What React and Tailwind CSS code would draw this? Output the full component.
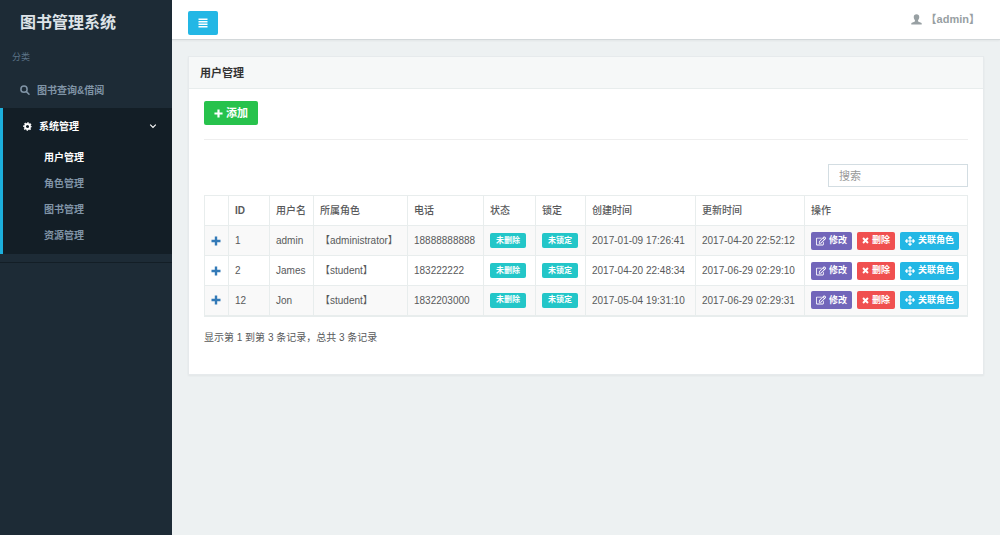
import React from 'react';
import { FaArrowsAlt, FaRegEdit } from 'react-icons/fa';

const users = [
  { id: 1, name: 'admin', role: '【administrator】', phone: '18888888888', created: '2017-01-09 17:26:41', updated: '2017-04-20 22:52:12' },
  { id: 2, name: 'James', role: '【student】', phone: '183222222', created: '2017-04-20 22:48:34', updated: '2017-06-29 02:29:10' },
  { id: 12, name: 'Jon', role: '【student】', phone: '1832203000', created: '2017-05-04 19:31:10', updated: '2017-06-29 02:29:31' },
];

const columns = [
  { title: '', width: 'w-[24px]' },
  { title: 'ID', width: 'w-[41px]' },
  { title: '用户名', width: 'w-[44px]' },
  { title: '所属角色', width: 'w-[94px]' },
  { title: '电话', width: 'w-[76px]' },
  { title: '状态', width: 'w-[52px]' },
  { title: '锁定', width: 'w-[50px]' },
  { title: '创建时间', width: 'w-[110px]' },
  { title: '更新时间', width: 'w-[109px]' },
  { title: '操作', width: '' },
];

const menu = ['用户管理', '角色管理', '图书管理', '资源管理'];

const PlusIcon = ({ className }) => (
  <svg viewBox="0 0 10 10" fill="currentColor" className={className}>
    <path d="M3.8 .5h2.4v3.3h3.3v2.4H6.2v3.3H3.8V6.2H.5V3.8h3.3z" />
  </svg>
);

const TimesIcon = ({ className }) => (
  <svg viewBox="0 0 10 10" fill="none" stroke="currentColor" strokeWidth="2.8" className={className}>
    <path d="M1.5 1.5l7 7M8.5 1.5l-7 7" />
  </svg>
);

const AngleIcon = ({ className }) => (
  <svg viewBox="0 0 10 10" fill="none" stroke="currentColor" strokeWidth="1.4" className={className}>
    <path d="M1.5 3.2L5 6.7l3.5-3.5" />
  </svg>
);

const BarsIcon = ({ className }) => (
  <svg viewBox="0 0 10 10" fill="currentColor" className={className}>
    <path d="M.5 .6h9v1.5h-9zM.5 3.100h9v1.500h-9zM.5 5.600h9v1.500h-9zM.5 8.100h9v1.500h-9z" />
  </svg>
);

const SearchIcon = ({ className }) => (
  <svg viewBox="0 0 10 10" fill="none" stroke="currentColor" strokeWidth="1.5" className={className}>
    <circle cx="4" cy="4.2" r="3.1" />
    <path d="M6.4 6.6l2.6 2.600" strokeLinecap="round" />
  </svg>
);

// ring with eight short teeth
const CogIcon = ({ className }) => (
  <svg viewBox="0 0 10 10" fill="none" stroke="currentColor" className={className}>
    <circle cx="5" cy="5" r="2.8" strokeWidth="2.1" />
    <circle cx="5" cy="5" r="4.2" strokeWidth="1.3" strokeDasharray="1.65 1.65" strokeDashoffset=".825" />
  </svg>
);

const UserIcon = ({ className }) => (
  <svg viewBox="0 0 12 12" fill="currentColor" className={className}>
    <path d="M6 .3c1.9 0 3 1.2 3 3 0 1.4-.5 2.7-1.3 3.5v.9c0 .4.2.6.6.8l2.700 1.100c.5.2.7.5.7.9v1H.3v-1c0-.4.2-.7.7-.9l2.700-1.100c.4-.2.6-.4.6-.8v-.9C3.500 6 3 4.700 3 3.300 3 1.500 4.100.3 6 .3z" />
  </svg>
);

const Tag = ({ children }) => (
  <span className="flex h-[15px] w-9 items-center justify-center rounded-xs bg-[#23c6c8] text-[8px] font-bold text-white">
    {children}
  </span>
);

const ActionButton = ({ color, icon, children }) => (
  <button type="button" className={`flex h-[18px] items-center gap-[3px] rounded-xs px-[5px] text-[9px] font-bold whitespace-nowrap text-white ${color}`}>
    {icon}
    {children}
  </button>
);

const Sidebar = () => (
  <aside className="w-43 shrink-0 bg-[#1d2b36] text-[10px] font-bold text-[#8094a6]">
    <h1 className="flex h-11 items-center px-5 pt-0.5 text-[16px] font-bold text-[#dde3e8]">图书管理系统</h1>
    <p className="flex h-7 items-center px-3 text-[9px] font-normal text-[#5c7387]">分类</p>
    <nav>
      <a href="#books" className="flex h-9 items-center gap-[7px] px-5">
        <SearchIcon className="size-[10px]" />
        图书查询&amp;借阅
      </a>
      <div className="border-l-3 border-[#1cafdc] bg-[#131e26] pb-1.5">
        <a href="#system" className="flex h-9 items-center gap-[7px] pr-[15px] pl-5 text-white">
          <CogIcon className="size-[9px]" />
          系统管理
          <AngleIcon className="ml-auto size-2" />
        </a>
        <ul>
          {menu.map((item, i) => (
            <li key={item}>
              <a href="#system" className={`flex h-[26px] items-center pl-[41px] ${i === 0 ? 'text-white' : ''}`}>
                {item}
              </a>
            </li>
          ))}
        </ul>
      </div>
      <hr className="mt-2 border-[#131e26]" />
    </nav>
  </aside>
);

const UserTable = () => (
  <table className="w-full table-fixed border-collapse border border-b-2 border-[#e8eded]">
    <colgroup>
      {columns.map((col) => (
        <col key={col.title} className={col.width} />
      ))}
    </colgroup>
    <thead>
      <tr className="h-[30px]">
        {columns.map((col) => (
          <th key={col.title} className="border border-[#e8eded] px-1.5 text-left font-medium whitespace-nowrap nth-[2]:font-bold">
            {col.title}
          </th>
        ))}
      </tr>
    </thead>
    <tbody>
      {users.map((user) => (
        <tr key={user.id} className="h-[30px] whitespace-nowrap odd:bg-[#f9f9f9] *:border *:border-[#e8eded] *:px-1.5">
          <td>
            <button type="button" aria-label="展开" className="flex text-[#337ab7]">
              <PlusIcon className="size-[10px]" />
            </button>
          </td>
          <td>{user.id}</td>
          <td>{user.name}</td>
          <td>{user.role}</td>
          <td>{user.phone}</td>
          <td><Tag>未删除</Tag></td>
          <td><Tag>未锁定</Tag></td>
          <td>{user.created}</td>
          <td>{user.updated}</td>
          <td>
            <div className="flex gap-[5px]">
              <ActionButton color="bg-[#7266ba]" icon={<FaRegEdit className="size-[10px]" />}>修改</ActionButton>
              <ActionButton color="bg-[#f05050]" icon={<TimesIcon className="size-[7px]" />}>删除</ActionButton>
              <ActionButton color="bg-[#23b7e5]" icon={<FaArrowsAlt className="size-[10px]" />}>关联角色</ActionButton>
            </div>
          </td>
        </tr>
      ))}
    </tbody>
  </table>
);

export default function App() {
  return (
    <div className="flex min-h-screen bg-[#edf1f2] font-['Liberation_Sans','Noto_Sans_CJK_SC',sans-serif] text-[10px] text-[#58595b]">
      <Sidebar />
      <div className="min-w-0 flex-1">
        <header className="flex h-10 items-center justify-between border-b border-[#d3d8da] bg-white px-4 shadow-xs">
          <button type="button" aria-label="菜单" className="mt-1.5 flex h-6 w-[30px] items-center justify-center rounded-xs bg-[#23b7e5] text-white">
            <BarsIcon className="size-[10px]" />
          </button>
          <a href="#profile" className="flex items-center gap-1 pr-1 text-[11px] font-bold text-[#98a0a3]">
            <UserIcon className="size-[11px]" />
            【admin】
          </a>
        </header>
        <main className="p-4">
          <section className="border border-[#e6eaec] bg-white shadow-xs">
            <h2 className="flex h-8 items-center border-b border-[#e8eded] bg-[#f6f8f8] px-[11px] pt-0.5 text-[11px] font-bold text-[#333]">用户管理</h2>
            <div className="px-[15px] pt-3 pb-7">
              <button type="button" className="flex h-6 items-center gap-[3px] rounded-xs bg-[#27c24c] px-[10px] text-[11px] font-bold text-white">
                <PlusIcon className="size-[9px]" />
                添加
              </button>
              <hr className="mt-[14px] mb-6 border-[#eee]" />
              <div className="mb-2 flex justify-end">
                <input
                  type="text"
                  aria-label="搜索"
                  placeholder="搜索"
                  className="h-[23px] w-35 border border-[#d3dde2] px-[10px] text-[11px] placeholder:text-[#999]"
                />
              </div>
              <UserTable />
              <p className="mt-[13px] leading-4">显示第 1 到第 3 条记录，总共 3 条记录</p>
            </div>
          </section>
        </main>
      </div>
    </div>
  );
}
